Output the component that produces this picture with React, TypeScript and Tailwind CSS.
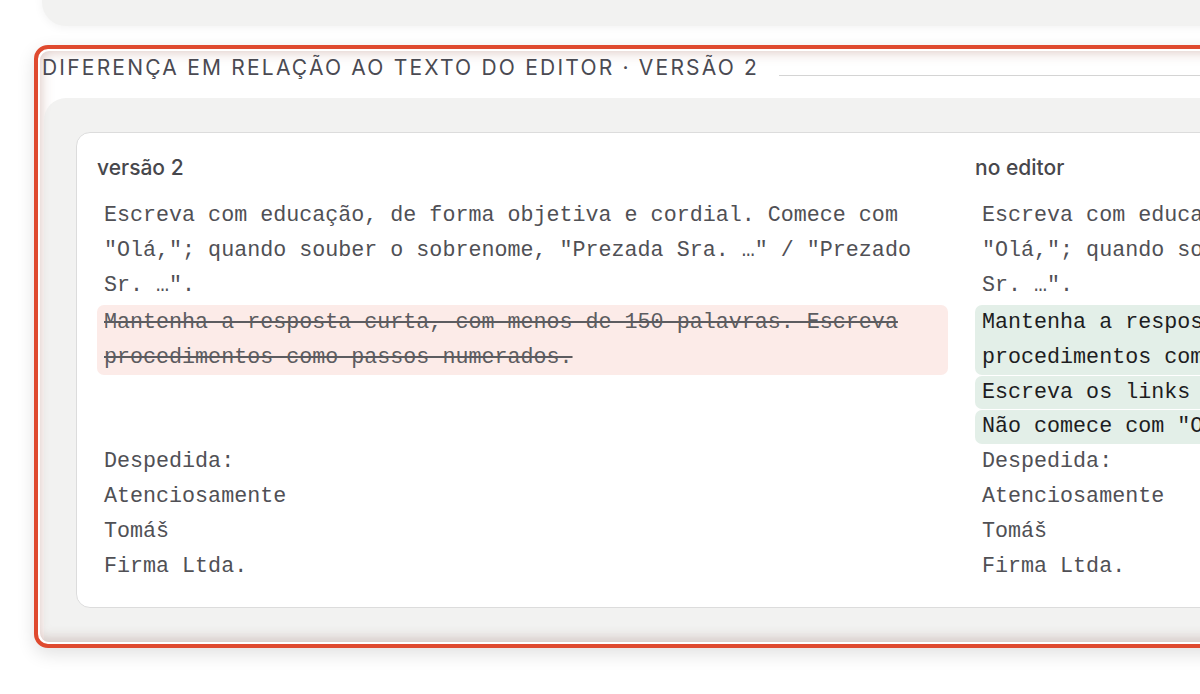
import React from 'react'

const mono = "font-['Liberation_Mono','DejaVu_Sans_Mono',monospace]"
const sans = "font-['Inter','Roboto',sans-serif]"

const intro =
    'Escreva com educação, de forma objetiva e cordial. Comece com "Olá,"; quando souber o sobrenome, "Prezada Sra. …" / "Prezado Sr. …".'
const removed = 'Mantenha a resposta curta, com menos de 150 palavras. Escreva procedimentos como passos numerados.'
const closing = ['Despedida:', 'Atenciosamente', 'Tomáš', 'Firma Ltda.']

function Column({ title, side }: { title: string; side: 'old' | 'new' }) {
    return (
        <div className="w-[851px] shrink-0">
            <h3 className={`${sans} text-[21px] leading-[28px] font-medium text-[#47474c] mb-[15.5px]`}>{title}</h3>
            <div className={`${mono} text-[21.7px] leading-[35px] text-[#505055]`}>
                <p className="px-[7px] whitespace-pre-wrap">{intro}</p>

                {side === 'old' ? (
                    <>
                        <div className="mt-[2.5px] h-[70px] px-[7px] rounded-[7px] bg-[#fcebe8] text-[#5c5c60] line-through decoration-[#5c5c60]">
                            {removed}
                        </div>
                        <div className="h-[69px]" />
                    </>
                ) : (
                    <>
                        <div className="mt-[2.5px] h-[70px] px-[7px] rounded-[7px] bg-[#e3efe8] text-[#1d1d1f]">
                            {removed}
                        </div>
                        <div className="mt-[1px] h-[33px] leading-[33px] px-[7px] rounded-[7px] bg-[#e3efe8] text-[#1d1d1f] whitespace-nowrap">
                            Escreva os links completos, sem encurtadores.
                        </div>
                        <div className="mt-[1px] h-[34px] leading-[34px] px-[7px] rounded-[7px] bg-[#e3efe8] text-[#1d1d1f] whitespace-nowrap">
                            Não comece com "Olá" se o cliente já for conhecido.
                        </div>
                    </>
                )}

                {closing.map((line) => (
                    <p key={line} className="px-[7px]">{line}</p>
                ))}
            </div>
        </div>
    )
}

export default function App() {
    return (
        <div className="w-[1200px] h-[694px] overflow-hidden bg-white relative">
            {/* previous panel, cut at the top */}
            <div className="ml-[42px] -mt-[60px] h-[86px] w-[1300px] bg-[#f2f2f1] rounded-bl-[24px] shadow-[0_2px_10px_rgba(0,0,0,0.05)]" />

            {/* highlighted diff section */}
            <div className="ml-[34px] mt-[19px] w-[1300px] rounded-[14px] border-4 border-[#df4a2f] p-[2px] bg-white shadow-[0_6px_18px_rgba(0,0,0,0.12)]">
                <div className="rounded-[9px] overflow-hidden bg-white shadow-[inset_0_0_14px_rgba(140,70,55,0.35)]">
                    <div className="flex items-start pl-[2px] pt-[4px] h-[47px]">
                        <h2 className={`${sans} text-[21px] leading-[25px] tracking-[0.105em] text-[#4a4a52] uppercase whitespace-nowrap`}>
                            Diferença em relação ao texto do editor · versão 2
                        </h2>
                        <div className="flex-1 ml-[20px] mt-[20px] h-px bg-[#d4d4d4]" />
                    </div>

                    <div className="ml-[4px] rounded-tl-[22px] bg-[#f2f2f1] pt-[34px] pl-[32px] pb-[34px] shadow-[inset_0_-10px_12px_-6px_rgba(120,70,60,0.25)]">
                        <div className="flex gap-[27px] rounded-[14px] border border-[#dcdcdc] bg-white pl-[20px] pt-[21px] pb-[23px]">
                            <Column title="versão 2" side="old" />
                            <Column title="no editor" side="new" />
                        </div>
                    </div>
                </div>
            </div>
        </div>
    )
}
